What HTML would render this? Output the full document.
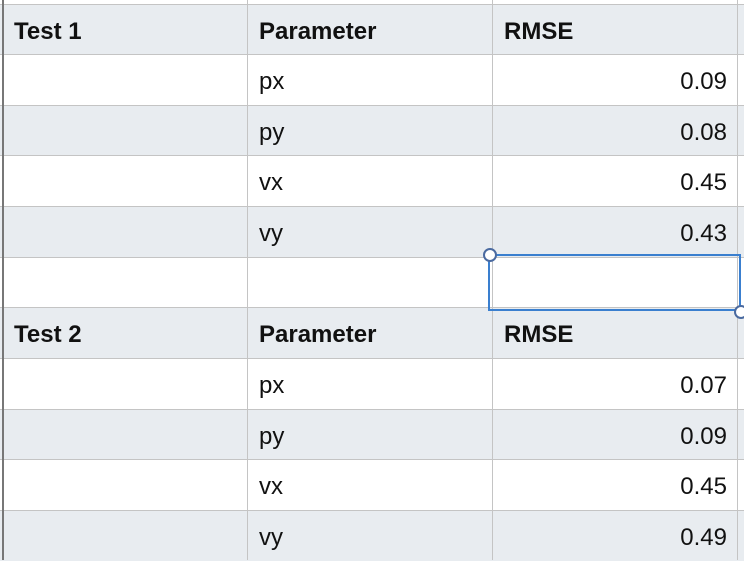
<!DOCTYPE html>
<html><head><style>
body{margin:0;width:744px;height:560px;overflow:hidden;background:#fff;position:relative;font-family:"Liberation Sans",Arial,sans-serif;}
.r{position:absolute;left:0;width:744px;border-top:1px solid #c4c4c4;box-sizing:border-box;}
.g{background:#e8ecf0;}
.c{position:absolute;top:0;font-size:24px;color:#111;line-height:53px;}
.b{font-weight:bold;}
.v{position:absolute;top:0;width:1px;height:560px;background:#c4c4c4;}
</style></head><body>
<div class="r g" style="top:4px;height:51px"><span class="c b" style="left:14px">Test 1</span><span class="c b" style="left:259px">Parameter</span><span class="c b" style="left:504px">RMSE</span></div>
<div class="r" style="top:54px;height:51px"><span class="c" style="left:259px">px</span><span class="c" style="right:17px">0.09</span></div>
<div class="r g" style="top:105px;height:51px"><span class="c" style="left:259px">py</span><span class="c" style="right:17px">0.08</span></div>
<div class="r" style="top:155px;height:51px"><span class="c" style="left:259px">vx</span><span class="c" style="right:17px">0.45</span></div>
<div class="r g" style="top:206px;height:51px"><span class="c" style="left:259px">vy</span><span class="c" style="right:17px">0.43</span></div>
<div class="r" style="top:257px;height:51px"></div>
<div class="r g" style="top:307px;height:51px"><span class="c b" style="left:14px">Test 2</span><span class="c b" style="left:259px">Parameter</span><span class="c b" style="left:504px">RMSE</span></div>
<div class="r" style="top:358px;height:51px"><span class="c" style="left:259px">px</span><span class="c" style="right:17px">0.07</span></div>
<div class="r g" style="top:409px;height:51px"><span class="c" style="left:259px">py</span><span class="c" style="right:17px">0.09</span></div>
<div class="r" style="top:459px;height:51px"><span class="c" style="left:259px">vx</span><span class="c" style="right:17px">0.45</span></div>
<div class="r g" style="top:510px;height:51px"><span class="c" style="left:259px">vy</span><span class="c" style="right:17px">0.49</span></div>
<div class="v" style="left:2px;width:2px;background:#777"></div>
<div class="v" style="left:247px"></div>
<div class="v" style="left:492px"></div>
<div class="v" style="left:737px"></div>
<div style="position:absolute;left:488px;top:254px;width:253px;height:57px;border:2px solid #3a7fcf;box-sizing:border-box;"></div>
<div style="position:absolute;left:483px;top:248px;width:10px;height:10px;border-radius:50%;background:#fff;border:2px solid #4a6aa0;"></div>
<div style="position:absolute;left:734px;top:305px;width:10px;height:10px;border-radius:50%;background:#fff;border:2px solid #4a6aa0;"></div>
</body></html>
